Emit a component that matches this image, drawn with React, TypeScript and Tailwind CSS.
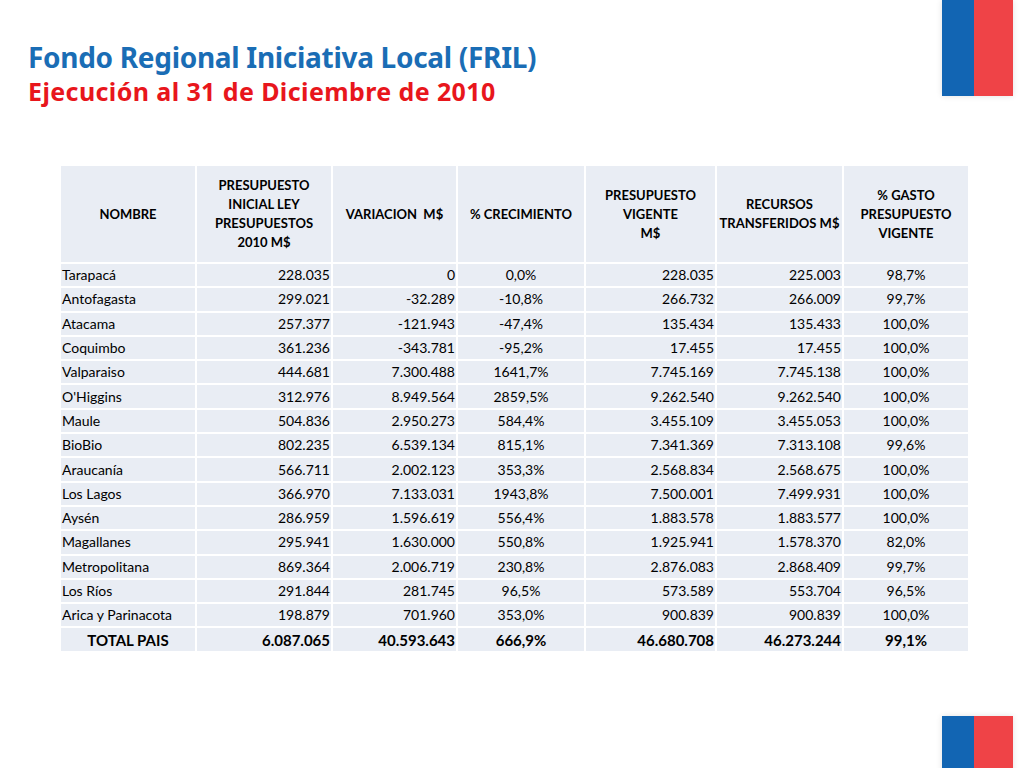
import React from "react";

const rows: string[][] = [
  ["Tarapacá", "228.035", "0", "0,0%", "228.035", "225.003", "98,7%"],
  ["Antofagasta", "299.021", "-32.289", "-10,8%", "266.732", "266.009", "99,7%"],
  ["Atacama", "257.377", "-121.943", "-47,4%", "135.434", "135.433", "100,0%"],
  ["Coquimbo", "361.236", "-343.781", "-95,2%", "17.455", "17.455", "100,0%"],
  ["Valparaiso", "444.681", "7.300.488", "1641,7%", "7.745.169", "7.745.138", "100,0%"],
  ["O'Higgins", "312.976", "8.949.564", "2859,5%", "9.262.540", "9.262.540", "100,0%"],
  ["Maule", "504.836", "2.950.273", "584,4%", "3.455.109", "3.455.053", "100,0%"],
  ["BioBio", "802.235", "6.539.134", "815,1%", "7.341.369", "7.313.108", "99,6%"],
  ["Araucanía", "566.711", "2.002.123", "353,3%", "2.568.834", "2.568.675", "100,0%"],
  ["Los Lagos", "366.970", "7.133.031", "1943,8%", "7.500.001", "7.499.931", "100,0%"],
  ["Aysén", "286.959", "1.596.619", "556,4%", "1.883.578", "1.883.577", "100,0%"],
  ["Magallanes", "295.941", "1.630.000", "550,8%", "1.925.941", "1.578.370", "82,0%"],
  ["Metropolitana", "869.364", "2.006.719", "230,8%", "2.876.083", "2.868.409", "99,7%"],
  ["Los Ríos", "291.844", "281.745", "96,5%", "573.589", "553.704", "96,5%"],
  ["Arica y Parinacota", "198.879", "701.960", "353,0%", "900.839", "900.839", "100,0%"],
];

const widths = ["w-[136px]", "w-[136px]", "w-[125px]", "w-[128px]", "w-[131px]", "w-[127px]", "w-[126px]"];
const aligns = ["text-left", "text-right", "text-right", "text-center", "text-right", "text-right", "text-center"];

function Flag({ h }: { h: string }) {
  return (
    <div className={`flex ${h} shadow-[0_0_6px_rgba(0,0,0,0.12)]`}>
      <div className="w-[32px] bg-[#1265b3]" />
      <div className="w-[39px] bg-[#ef4347]" />
    </div>
  );
}

export default function App() {
  return (
    <div className="w-[1024px] h-[768px] bg-white relative overflow-hidden" style={{ fontFamily: "Lato, 'Liberation Sans', sans-serif" }}>
      <div className="absolute right-[11px] top-0">
        <Flag h="h-[96px]" />
      </div>
      <div className="absolute right-[11px] top-[716px]">
        <Flag h="h-[60px]" />
      </div>

      <div className="pl-[28px] pt-[38px]" style={{ fontFamily: "'Noto Sans', sans-serif" }}>
        <div className="text-[#1a6db5] text-[28px] font-bold leading-[38px] tracking-[-0.3px]">
          Fondo Regional Iniciativa Local (FRIL)
        </div>
        <div className="text-[#e8161c] text-[25px] font-bold leading-[30px] tracking-[0.4px]">
          Ejecución al 31 de Diciembre de 2010
        </div>
      </div>

      <div className="pl-[59px] pt-[58px]">
        <table className="border-collapse table-fixed text-[14px] text-black">
          <thead>
            <tr className="h-[98px]">
              {[
                ["NOMBRE"],
                ["PRESUPUESTO", "INICIAL LEY", "PRESUPUESTOS", "2010 M$"],
                ["VARIACION  M$"],
                ["% CRECIMIENTO"],
                ["PRESUPUESTO", "VIGENTE", "M$"],
                ["RECURSOS", "TRANSFERIDOS M$"],
                ["% GASTO", "PRESUPUESTO", "VIGENTE"],
              ].map((lines, i) => (
                <th key={i} className={`${widths[i]} bg-[#e9edf4] border-2 border-white text-center align-middle font-bold text-[13px] leading-[19px] px-0 whitespace-pre`}>
                  {lines.map((l, j) => (
                    <div key={j}>{l}</div>
                  ))}
                </th>
              ))}
            </tr>
          </thead>
          <tbody>
            {rows.map((r, ri) => (
              <tr key={ri} className="h-[24.3px]">
                {r.map((c, ci) => (
                  <td key={ci} className={`bg-[#e9edf4] border-2 border-white ${aligns[ci]} px-[1px] leading-[18px] whitespace-nowrap`}>
                    {c}
                  </td>
                ))}
              </tr>
            ))}
            <tr className="h-[25px]">
              {["TOTAL PAIS", "6.087.065", "40.593.643", "666,9%", "46.680.708", "46.273.244", "99,1%"].map((c, ci) => (
                <td key={ci} className={`bg-[#e9edf4] border-2 border-white ${ci === 0 ? "text-center" : aligns[ci]} px-[1px] font-bold text-[15px] leading-[18px] whitespace-nowrap`}>
                  {c}
                </td>
              ))}
            </tr>
          </tbody>
        </table>
      </div>
    </div>
  );
}
